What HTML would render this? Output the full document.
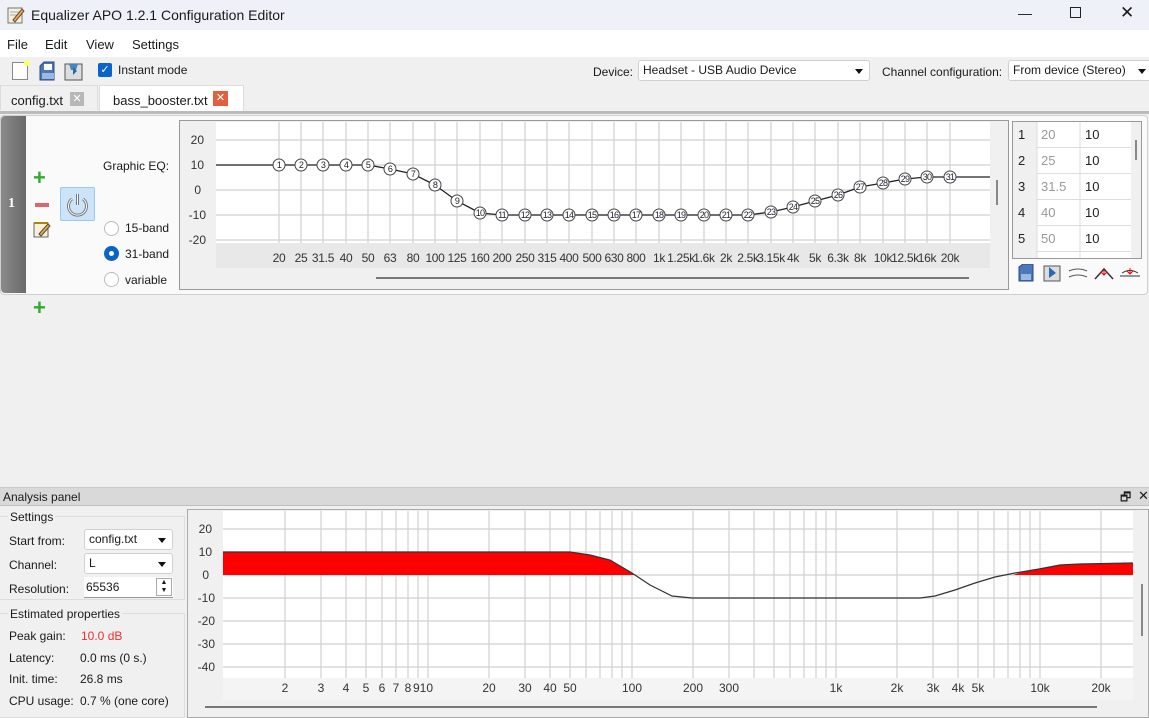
<!DOCTYPE html>
<html><head><meta charset="utf-8"><style>
*{box-sizing:border-box;margin:0;padding:0}
body{width:1149px;height:718px;overflow:hidden;background:#f0f0f0;font-family:"Liberation Sans","DejaVu Sans",sans-serif;font-size:12px;color:#1a1a1a;position:relative}
.a{position:absolute}
.combo{position:absolute;background:#fff;border:1px solid #d0d0d0;border-radius:3px;height:21px;padding:2px 4px;font-size:12px}
.combo:after{content:"";position:absolute;right:6px;top:8px;border-left:4px solid transparent;border-right:4px solid transparent;border-top:5px solid #111}
</style></head><body>
<!-- title bar -->
<div class="a" style="left:0;top:0;width:1149px;height:30px;background:#eef1f8"></div>
<svg class="a" style="left:7px;top:6px" width="18" height="18"><rect x="1" y="2" width="14" height="15" fill="#f5f0e0" stroke="#776" /><line x1="3" y1="6" x2="13" y2="6" stroke="#aaa"/><line x1="3" y1="9" x2="13" y2="9" stroke="#aaa"/><path d="M6 14 L15 3 L17 5 L8 16 Z" fill="#e8b040" stroke="#744"/></svg>
<div class="a" style="left:31px;top:7px;font-size:14px">Equalizer APO 1.2.1 Configuration Editor</div>
<div class="a" style="left:1018px;top:5px;font-size:14px">—</div>
<div class="a" style="left:1070px;top:7px;width:11px;height:11px;border:1px solid #222"></div>
<div class="a" style="left:1120px;top:3px;font-size:17px">✕</div>
<!-- menu -->
<div class="a" style="left:0;top:30px;width:1149px;height:27px;background:#fff"></div>
<div class="a" style="left:7px;top:37px;font-size:13px">File</div>
<div class="a" style="left:45px;top:37px;font-size:13px">Edit</div>
<div class="a" style="left:86px;top:37px;font-size:13px">View</div>
<div class="a" style="left:132px;top:37px;font-size:13px">Settings</div>
<!-- toolbar -->
<div class="a" style="left:12px;top:62px;width:16px;height:18px;background:#fff;border:1px solid #888"></div>
<div class="a" style="left:24px;top:60px;width:6px;height:6px;background:#ff6;border-radius:3px"></div>
<svg class="a" style="left:38px;top:61px" width="20" height="20"><path d="M2 5 L6 1 H16 V19 H2Z" fill="#4a78b8" stroke="#2a4a80"/><rect x="6" y="3" width="8" height="6" fill="#fff"/><rect x="4" y="12" width="12" height="6" fill="#9ab8e0"/></svg>
<svg class="a" style="left:64px;top:61px" width="20" height="20"><rect x="1" y="3" width="17" height="16" fill="#ddd" stroke="#555"/><path d="M5 3 H14 L12 9 H7Z" fill="#48b"/><path d="M9 6 L13 10 L9 14 Z" fill="#2a6ab0"/></svg>
<div class="a" style="left:98px;top:63px;width:14px;height:14px;background:#0a64c8;border-radius:2px;color:#fff;font-size:11px;line-height:14px;text-align:center">✓</div>
<div class="a" style="left:118px;top:63px">Instant mode</div>
<div class="a" style="left:593px;top:65px">Device:</div>
<div class="combo" style="left:638px;top:60px;width:232px">Headset - USB Audio Device</div>
<div class="a" style="left:882px;top:65px">Channel configuration:</div>
<div class="combo" style="left:1008px;top:60px;width:145px">From device (Stereo)</div>
<!-- tabs -->
<div class="a" style="left:0;top:85px;width:98px;height:25px;background:#f0f0f0;border:1px solid #ddd;border-bottom:none"></div>
<div class="a" style="left:11px;top:93px;font-size:13px">config.txt</div>
<div class="a" style="left:70px;top:92px;width:14px;height:14px;background:#b8b8b8;color:#fff;font-size:11px;line-height:14px;text-align:center">✕</div>
<div class="a" style="left:99px;top:85px;width:145px;height:27px;background:#fff;border:1px solid #ddd;border-bottom:none"></div>
<div class="a" style="left:113px;top:93px;font-size:13px">bass_booster.txt</div>
<div class="a" style="left:213px;top:91px;width:15px;height:15px;background:#e06040;color:#fff;font-size:11px;line-height:15px;text-align:center">✕</div>
<div class="a" style="left:0;top:111px;width:1149px;height:3px;background:#bbb"></div>
<!-- filter card -->
<div class="a" style="left:0;top:115px;width:1148px;height:180px;background:#fafafa;border:1px solid #cfcfcf;border-radius:4px"></div>
<div class="a" style="left:1px;top:116px;width:25px;height:177px;background:linear-gradient(90deg,#8a8a8a,#6a6a6a);border-radius:4px 0 0 4px"></div>
<div class="a" style="left:8px;top:196px;color:#fff;font-weight:bold;font-family:'Liberation Serif',serif;font-size:14px">1</div>
<div class="a" style="left:33px;top:167px;color:#3a3;font-size:22px;font-weight:bold;line-height:22px">+</div>
<div class="a" style="left:35px;top:203px;width:14px;height:4px;background:#d66"></div>
<svg class="a" style="left:33px;top:220px" width="18" height="18"><rect x="1" y="3" width="14" height="14" fill="#f5f0d8" stroke="#666"/><line x1="1" y1="3" x2="15" y2="3" stroke="#a80" stroke-width="2"/><path d="M6 14 L15 4 L17 6 L8 16Z" fill="#e8b040" stroke="#544"/></svg>
<div class="a" style="left:60px;top:187px;width:35px;height:34px;background:#cce4fa;border:1px solid #99c8f2;border-radius:2px"></div>
<svg class="a" style="left:63px;top:190px" width="29" height="29"><path d="M9 9 A9 9 0 1 0 20 9" fill="none" stroke="#777" stroke-width="3"/><line x1="14.5" y1="4" x2="14.5" y2="15" stroke="#777" stroke-width="3"/><path d="M9 9 A9 9 0 1 0 20 9" fill="none" stroke="#fff" stroke-width="1"/><line x1="14.5" y1="4" x2="14.5" y2="15" stroke="#fff" stroke-width="1"/></svg>
<div class="a" style="left:103px;top:159px">Graphic EQ:</div>
<div class="a" style="left:104px;top:221px;width:15px;height:15px;border:1px solid #bbb;border-radius:50%;background:#fff"></div>
<div class="a" style="left:125px;top:221px">15-band</div>
<div class="a" style="left:104px;top:246px;width:15px;height:15px;border-radius:50%;background:#0a64c8"></div>
<div class="a" style="left:109px;top:251px;width:5px;height:5px;border-radius:50%;background:#fff"></div>
<div class="a" style="left:125px;top:247px">31-band</div>
<div class="a" style="left:104px;top:272px;width:15px;height:15px;border:1px solid #bbb;border-radius:50%;background:#fff"></div>
<div class="a" style="left:125px;top:273px">variable</div>
<!-- EQ graph -->
<svg class="a" style="left:179px;top:120px" width="830" height="170">
<rect x="0.5" y="0.5" width="829" height="169" fill="#f0f0f0" stroke="#999"/>
<rect x="37" y="2" width="774" height="121" fill="#fff"/>
<rect x="37" y="123" width="774" height="25" fill="#e8e8e8"/>
<g stroke="#d0d0d0" stroke-width="1.2">
<path d="M37 20H811M37 45H811M37 70H811M37 95H811M37 120H811"/>
<path d="M100 2V123M122 2V123M144 2V123M167 2V123M189 2V123M211 2V123M234 2V123M256 2V123M278 2V123M301 2V123M323 2V123M346 2V123M368 2V123M390 2V123M413 2V123M435 2V123M457 2V123M480 2V123M502 2V123M525 2V123M547 2V123M569 2V123M592 2V123M614 2V123M636 2V123M659 2V123M681 2V123M704 2V123M726 2V123M748 2V123M771 2V123"/>
</g>
<g font-size="12" fill="#333" text-anchor="end"><text x="25" y="24">20</text><text x="25" y="49">10</text><text x="22" y="74">0</text><text x="27" y="99">-10</text><text x="27" y="124">-20</text></g>
<g font-size="12" fill="#333" text-anchor="middle" letter-spacing="-0.3">
<text x="100" y="142">20</text><text x="122" y="142">25</text><text x="144" y="142">31.5</text><text x="167" y="142">40</text><text x="189" y="142">50</text><text x="211" y="142">63</text><text x="234" y="142">80</text><text x="256" y="142">100</text><text x="278" y="142">125</text><text x="301" y="142">160</text><text x="323" y="142">200</text><text x="346" y="142">250</text><text x="368" y="142">315</text><text x="390" y="142">400</text><text x="413" y="142">500</text><text x="435" y="142">630</text><text x="457" y="142">800</text><text x="480" y="142">1k</text><text x="502" y="142">1.25k</text><text x="525" y="142">1.6k</text><text x="547" y="142">2k</text><text x="569" y="142">2.5k</text><text x="592" y="142">3.15k</text><text x="614" y="142">4k</text><text x="636" y="142">5k</text><text x="659" y="142">6.3k</text><text x="681" y="142">8k</text><text x="704" y="142">10k</text><text x="726" y="142">12.5k</text><text x="748" y="142">16k</text><text x="771" y="142">20k</text></g>
<polyline fill="none" stroke="#222" stroke-width="1.3" points="37,45 100,45 122,45 144,45 167,45 189,45 211,49 234,54 256,65 278,81 301,93 323,95 346,95 368,95 390,95 413,95 435,95 457,95 480,95 502,95 525,95 547,95 569,95 592,92 614,87 636,81 659,75 681,67 704,63 726,59 748,57 771,57 811,57"/>
<g fill="#fff" stroke="#444" stroke-width="1"><circle cx="100" cy="45" r="6"/><circle cx="122" cy="45" r="6"/><circle cx="144" cy="45" r="6"/><circle cx="167" cy="45" r="6"/><circle cx="189" cy="45" r="6"/><circle cx="211" cy="49" r="6"/><circle cx="234" cy="54" r="6"/><circle cx="256" cy="65" r="6"/><circle cx="278" cy="81" r="6"/><circle cx="301" cy="93" r="6"/><circle cx="323" cy="95" r="6"/><circle cx="346" cy="95" r="6"/><circle cx="368" cy="95" r="6"/><circle cx="390" cy="95" r="6"/><circle cx="413" cy="95" r="6"/><circle cx="435" cy="95" r="6"/><circle cx="457" cy="95" r="6"/><circle cx="480" cy="95" r="6"/><circle cx="502" cy="95" r="6"/><circle cx="525" cy="95" r="6"/><circle cx="547" cy="95" r="6"/><circle cx="569" cy="95" r="6"/><circle cx="592" cy="92" r="6"/><circle cx="614" cy="87" r="6"/><circle cx="636" cy="81" r="6"/><circle cx="659" cy="75" r="6"/><circle cx="681" cy="67" r="6"/><circle cx="704" cy="63" r="6"/><circle cx="726" cy="59" r="6"/><circle cx="748" cy="57" r="6"/><circle cx="771" cy="57" r="6"/></g>
<g font-size="9" fill="#223" text-anchor="middle" letter-spacing="-0.8"><text x="100" y="48">1</text><text x="122" y="48">2</text><text x="144" y="48">3</text><text x="167" y="48">4</text><text x="189" y="48">5</text><text x="211" y="52">6</text><text x="234" y="57">7</text><text x="256" y="68">8</text><text x="278" y="84">9</text><text x="301" y="96">10</text><text x="323" y="98">11</text><text x="346" y="98">12</text><text x="368" y="98">13</text><text x="390" y="98">14</text><text x="413" y="98">15</text><text x="435" y="98">16</text><text x="457" y="98">17</text><text x="480" y="98">18</text><text x="502" y="98">19</text><text x="525" y="98">20</text><text x="547" y="98">21</text><text x="569" y="98">22</text><text x="592" y="95">23</text><text x="614" y="90">24</text><text x="636" y="84">25</text><text x="659" y="78">26</text><text x="681" y="70">27</text><text x="704" y="66">28</text><text x="726" y="62">29</text><text x="748" y="60">30</text><text x="771" y="60">31</text></g>
<line x1="197" y1="158" x2="790" y2="158" stroke="#777" stroke-width="2"/>
<rect x="817" y="60" width="2" height="25" fill="#888"/>
</svg>
<!-- table -->
<div class="a" style="left:1012px;top:121px;width:130px;height:138px;background:#f0f0f0;border:1px solid #999"></div>
<svg class="a" style="left:1013px;top:122px" width="120" height="136"><rect x="24" y="0" width="94" height="136" fill="#fff"/><g stroke="#ddd"><path d="M24 0V136M67 0V136M24 25.5H118M24 51.5H118M24 77.5H118M24 103.5H118M24 129.5H118"/></g>
<g font-size="13" fill="#222"><text x="5" y="17">1</text><text x="5" y="43">2</text><text x="5" y="69">3</text><text x="5" y="95">4</text><text x="5" y="121">5</text>
<text x="72" y="17">10</text><text x="72" y="43">10</text><text x="72" y="69">10</text><text x="72" y="95">10</text><text x="72" y="121">10</text></g>
<g font-size="13" fill="#999"><text x="28" y="17">20</text><text x="28" y="43">25</text><text x="28" y="69">31.5</text><text x="28" y="95">40</text><text x="28" y="121">50</text></g></svg>
<div class="a" style="left:1135px;top:140px;width:2px;height:20px;background:#888"></div>
<svg class="a" style="left:1016px;top:264px" width="130" height="20"><path d="M3 3 L7 0 H17 V17 H3Z" fill="#4a78b8" stroke="#2a4a80"/><rect x="5" y="10" width="10" height="6" fill="#9ab8e0"/>
<rect x="28" y="2" width="16" height="15" fill="#ddd" stroke="#555"/><path d="M33 3 L40 9 L33 14Z" fill="#2a6ab0"/>
<path d="M53 7 Q62 3 71 7 M53 13 Q62 9 71 13" fill="none" stroke="#555"/>
<path d="M79 15 L88 5 L97 15" fill="none" stroke="#333" stroke-width="1.5"/><path d="M88 4 V11 M85 8 L88 11 L91 8" stroke="#e00" fill="none"/>
<path d="M104 12 H124 M106 9 Q114 4 122 9" fill="none" stroke="#333"/><path d="M114 4 V10 M111 7 L114 10 L117 7" stroke="#e00" fill="none"/></svg>
<div class="a" style="left:33px;top:297px;color:#3a3;font-size:22px;font-weight:bold;line-height:22px">+</div>
<!-- analysis panel -->
<div class="a" style="left:0;top:487px;width:1149px;height:19px;background:#d9d9d9;border-top:1px solid #c8c8c8;border-bottom:1px solid #c0c0c0"></div>
<div class="a" style="left:3px;top:490px">Analysis panel</div>
<div class="a" style="left:1120px;top:488px;font-size:12px">🗗</div>
<div class="a" style="left:1138px;top:488px;font-size:13px">✕</div>
<div class="a" style="left:0;top:516px;width:185px;height:84px;border:1px solid #ddd;border-left:none"></div>
<div class="a" style="left:8px;top:510px;background:#f0f0f0;padding:0 2px">Settings</div>
<div class="a" style="left:9px;top:534px">Start from:</div>
<div class="combo" style="left:84px;top:529px;width:89px">config.txt</div>
<div class="a" style="left:9px;top:558px">Channel:</div>
<div class="combo" style="left:84px;top:553px;width:89px">L</div>
<div class="a" style="left:9px;top:582px">Resolution:</div>
<div class="a" style="left:84px;top:577px;width:89px;height:21px;background:#fff;border-bottom:1px solid #999;padding:3px 2px">65536</div>
<div class="a" style="left:156px;top:578px;width:16px;height:18px;border:1px solid #aaa;font-size:7px;line-height:8px;text-align:center">▲<br>▼</div>
<div class="a" style="left:0;top:613px;width:185px;height:105px;border:1px solid #ddd;border-left:none"></div>
<div class="a" style="left:8px;top:607px;background:#f0f0f0;padding:0 2px">Estimated properties</div>
<div class="a" style="left:9px;top:629px">Peak gain:</div><div class="a" style="left:81px;top:629px;color:#f03030">10.0 dB</div>
<div class="a" style="left:9px;top:651px">Latency:</div><div class="a" style="left:80px;top:651px">0.0 ms (0 s.)</div>
<div class="a" style="left:9px;top:672px">Init. time:</div><div class="a" style="left:80px;top:672px">26.8 ms</div>
<div class="a" style="left:9px;top:694px">CPU usage:</div><div class="a" style="left:80px;top:694px">0.7 % (one core)</div>
<svg class="a" style="left:187px;top:509px" width="962" height="209">
<rect x="0.5" y="0.5" width="961" height="208" fill="#f0f0f0" stroke="#aaa"/>
<rect x="36" y="2" width="910" height="167" fill="#fff"/>
<rect x="36" y="169" width="910" height="22" fill="#f4f4f4"/>
<g stroke="#d0d0d0" stroke-width="1.2">
<path d="M36 20H946M36 43H946M36 66H946M36 89H946M36 112H946M36 135H946M36 158H946"/>
<path d="M98 2V169M134 2V169M159 2V169M179 2V169M195 2V169M209 2V169M221 2V169M231 2V169M241 2V169M302 2V169M338 2V169M363 2V169M383 2V169M399 2V169M413 2V169M425 2V169M435 2V169M445 2V169M506 2V169M542 2V169M567 2V169M587 2V169M603 2V169M617 2V169M629 2V169M639 2V169M649 2V169M710 2V169M746 2V169M771 2V169M791 2V169M807 2V169M821 2V169M833 2V169M843 2V169M853 2V169M914 2V169"/>
</g>
<g font-size="12" fill="#333" text-anchor="end"><text x="25" y="24">20</text><text x="25" y="47">10</text><text x="22" y="70">0</text><text x="28" y="93">-10</text><text x="28" y="116">-20</text><text x="28" y="139">-30</text><text x="28" y="162">-40</text></g>
<g font-size="12" fill="#333" text-anchor="middle"><text x="98" y="183">2</text><text x="134" y="183">3</text><text x="159" y="183">4</text><text x="179" y="183">5</text><text x="195" y="183">6</text><text x="209" y="183">7</text><text x="221" y="183">8</text><text x="236" y="183">910</text><text x="302" y="183">20</text><text x="338" y="183">30</text><text x="363" y="183">40</text><text x="383" y="183">50</text><text x="445" y="183">100</text><text x="506" y="183">200</text><text x="542" y="183">300</text><text x="649" y="183">1k</text><text x="710" y="183">2k</text><text x="746" y="183">3k</text><text x="771" y="183">4k</text><text x="791" y="183">5k</text><text x="853" y="183">10k</text><text x="914" y="183">20k</text></g>
<path d="M36 43 H383 L403 46 L423 51 L445 64 L447 66 H36Z" fill="#f00"/>
<path d="M826 66 L832 64 L852 60 L873 56 L893 55 L946 54 V66Z" fill="#f00"/>
<polyline fill="none" stroke="#333" stroke-width="1.2" points="36,43 383,43 403,46 423,51 445,64 463,76 485,87 505,89 733,89 748,87 768,81 788,74 808,68 828,64 852,60 873,56 893,55 946,54"/>
<line x1="18" y1="198" x2="910" y2="198" stroke="#777" stroke-width="2"/>
<rect x="954" y="75" width="2" height="52" fill="#888"/>
</svg>
</body></html>
